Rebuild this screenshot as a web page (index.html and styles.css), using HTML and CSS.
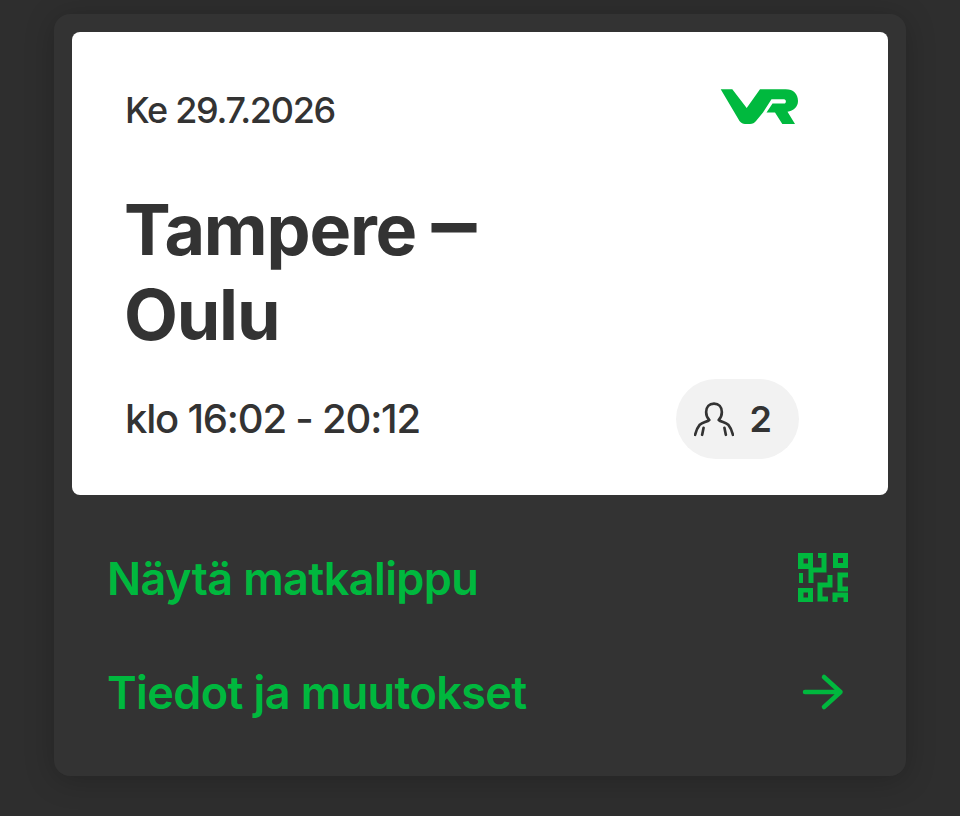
FILE: index.html
```html
<!DOCTYPE html>
<html lang="fi">

<head>
  <meta charset="UTF-8" />
  <meta name="viewport" content="width=device-width, initial-scale=1.0" />
  <title>Matkalippu</title>
  <link rel="stylesheet" href="styles.css">
</head>

<body>

  <div class="card">
    <!-- Lipun tiedot -->
    <div class="ticket">
      <div class="ticket-top">
        <span class="date">Ke 29.7.2026</span>
        <svg class="logo" viewBox="0 0 80 40" width="80" height="40">
          <path d="M1.7 1.3H13.3L27.7 20L41 1.3H66.7C74.500 1.3 79 6 79 13C79 19 74.5 23 68.5 23.7L76 36H63.3L56 24.500H47.500L53.500 15.500H65C67.500 15.500 67.500 11.300 65 11.300H52.500L44 24.500L37 33C35.5 35 33.5 36 31 36H26C24 36 22 35 20.5 33Z" />
        </svg>
      </div>
      <h1 class="route">Tampere <span class="dash">–</span><br>Oulu</h1>
      <div class="ticket-bottom">
        <span class="time">klo 16:02 - 20:12</span>
        <span class="passengers">
          <svg class="person" viewBox="0 0 42 38" width="40" height="36">
            <path d="M16 20C13.5 17.5 12.7 14.5 12.7 11.7C12.7 6 16 2.7 21 2.7C26 2.7 29.3 6 29.3 11.7C29.3 14.5 28.5 17.5 26 20C28 22 33 22.500 36 25C38.500 28 40 32 41 35.700M16 20C14 22 9 22.500 6 25C3.500 28 2 32 1 35.700M10 28.300L8.500 35.700M32 28.300L33.500 35.700" />
          </svg>
          2
        </span>
      </div>
    </div>

    <a class="action" href="#">
      Näytä matkalippu
      <svg class="qr" viewBox="0 0 50 50" width="50" height="50">
        <path fill-rule="evenodd" d="M0 0H15V16H0ZM5.500 5.500V10.500H10V5.500ZM35 0H50V15H35ZM40 5V10H45V5ZM0 35H15V49H0ZM5.500 39.500V44.500H10V39.500ZM1 20H5V30H1Z" />
        <path class="qr-line" d="M20 2.500H26V17H13V30M32 22V32H22V46H30M50 22H42V36H50M37 49V42H48V49" />
      </svg>
    </a>
    <a class="action" href="#">
      Tiedot ja muutokset
      <svg class="arrow" viewBox="0 0 50 40" width="50" height="40">
        <path d="M6 20H41.500M25 5L41.500 20L25 35" />
      </svg>
    </a>
  </div>

</body>

</html>
```

FILE: styles.css
```css
body {
  font-family: 'Inter', 'Liberation Sans', sans-serif;
  margin: 0;
  padding: 14px 54px 0;
  height: 816px;
  box-sizing: border-box;
  background-color: #2e2e2e;
  overflow: hidden;
}

.card {
  height: 762px;
  box-sizing: border-box;
  padding: 18px 18px 0;
  background-color: #333333;
  border-radius: 16px;
  box-shadow: 0 4px 30px rgba(0, 0, 0, 0.22);
}

.ticket {
  height: 463px;
  box-sizing: border-box;
  padding: 54px 89px 36px 53px;
  background-color: white;
  border-radius: 8px;
  color: #333333;
}

.ticket-top {
  display: flex;
  justify-content: space-between;
  align-items: center;
  height: 48px;
}

.date {
  font-size: 36px;
  font-weight: 500;
  letter-spacing: -1.3px;
}

.logo {
  fill: #00b93e;
  margin-top: -4px;
}

.route {
  margin: 53px 0 0 -1px;
  font-size: 70px;
  line-height: 85px;
  font-weight: 650;
  letter-spacing: -1.2px;
}

.dash {
  font-size: 90px;
  font-weight: 600;
  line-height: 0;
}

.ticket-bottom {
  display: flex;
  justify-content: space-between;
  align-items: center;
  margin-top: 22px;
}

.time {
  margin-top: -2px;
  font-size: 40px;
  letter-spacing: -1.2px;
  font-weight: 500;
}

.passengers {
  display: flex;
  align-items: center;
  gap: 16px;
  height: 80px;
  padding: 0 27px 0 18px;
  background-color: #f2f2f2;
  border-radius: 40px;
  font-size: 36px;
  font-weight: 600;
}

.person {
  fill: none;
  stroke: #333333;
  stroke-width: 2.8;
  stroke-linecap: round;
  stroke-linejoin: round;
}

.action {
  display: flex;
  justify-content: space-between;
  align-items: center;
  height: 114px;
  padding: 0 39px 0 35px;
  color: #00b83e;
  font-size: 45px;
  font-weight: 600;
  letter-spacing: -0.6px;
  text-decoration: none;
}

.ticket + .action {
  margin-top: 26px;
}

.qr {
  fill: #00b83e;
  margin-right: 1px;
}

.qr-line {
  fill: none;
  stroke: #00b83e;
  stroke-width: 5;
}

.arrow {
  fill: none;
  stroke: #00b83e;
  stroke-width: 4.500;
  stroke-linecap: round;
  stroke-linejoin: round;
}
```
